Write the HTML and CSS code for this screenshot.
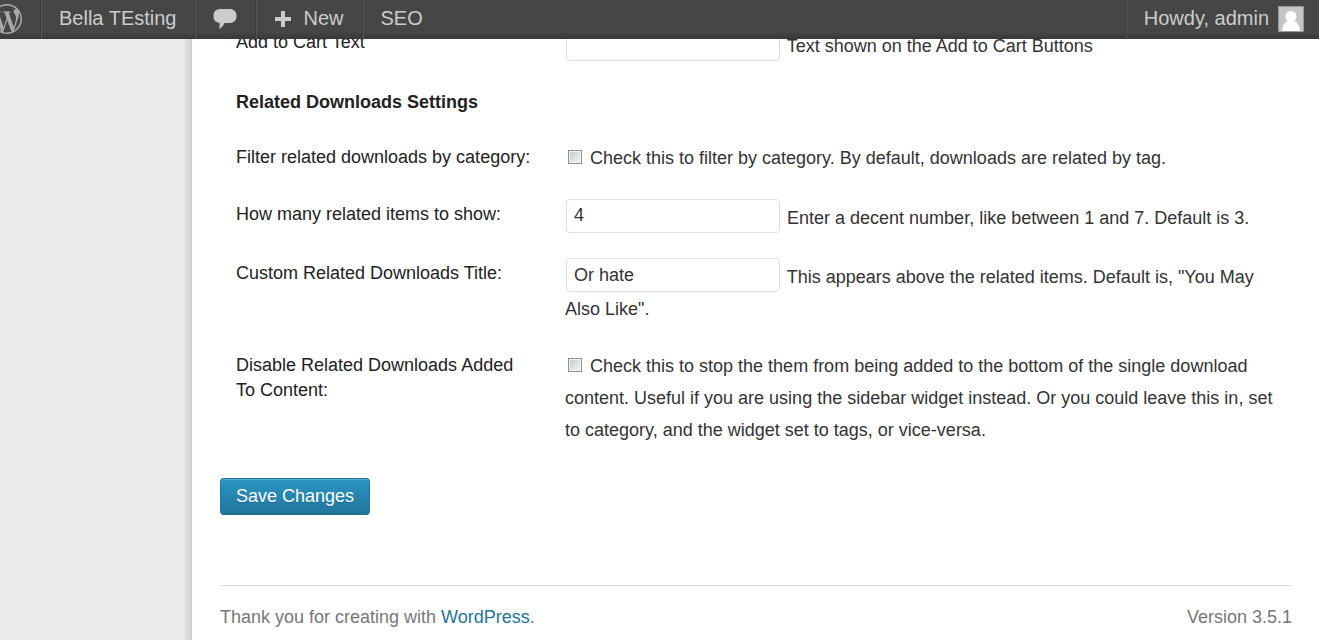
FILE: index.html
```html
<!DOCTYPE html>
<html lang="en">
<head>
    <meta charset="UTF-8">
    <meta name="viewport" content="width=device-width, initial-scale=1.0">
    <title>Settings - Bella TEsting</title>
    <link rel="stylesheet" href="styles.css">
</head>
<body>

    <nav class="adminbar">
        <a href="#" class="bar-item bar-logo" aria-label="About WordPress">
            <svg class="logo" viewBox="0 0 24 24"><path d="M21.469 6.825c.84 1.537 1.318 3.3 1.318 5.175 0 3.979-2.156 7.456-5.363 9.325l3.295-9.527c.615-1.54.82-2.771.82-3.864 0-.405-.026-.78-.07-1.11m-7.981.105c.647-.03 1.232-.105 1.232-.105.582-.075.514-.93-.067-.899 0 0-1.755.135-2.88.135-1.064 0-2.85-.15-2.85-.15-.585-.03-.661.855-.075.885 0 0 .54.061 1.125.09l1.68 4.605-2.37 7.08L5.354 6.9c.649-.03 1.234-.1 1.234-.1.585-.075.516-.93-.065-.896 0 0-1.746.138-2.874.138-.2 0-.438-.008-.69-.015C4.911 3.15 8.235 1.215 12 1.215c2.809 0 5.365 1.072 7.286 2.833-.046-.003-.091-.009-.141-.009-1.06 0-1.812.923-1.812 1.914 0 .89.513 1.643 1.06 2.531.411.72.89 1.643.89 2.977 0 .915-.354 1.994-.821 3.479l-1.075 3.585-3.9-11.61.001.014zM12 22.784c-1.059 0-2.081-.153-3.048-.437l3.237-9.406 3.315 9.087c.024.053.05.101.078.149-1.12.393-2.325.609-3.582.609M1.211 12c0-1.564.336-3.05.935-4.39L7.29 21.709C3.694 19.96 1.212 16.271 1.211 12M12 0C5.385 0 0 5.385 0 12s5.385 12 12 12 12-5.385 12-12S18.615 0 12 0"/></svg>
        </a>
        <a href="#" class="bar-item">Bella TEsting</a>
        <a href="#" class="bar-item" aria-label="Comments">
            <svg class="bubble" viewBox="0 0 24 22"><path d="M8 1h8c5 0 7.500 2.600 7.500 7s-2.500 7-7.500 7h-4.500c-1 2.600-2.800 4.600-5.500 6 .6-2 .8-4 .4-6.200C2.500 14.200.5 12 .5 8c0-4.400 2.500-7 7.500-7z"/></svg>
        </a>
        <a href="#" class="bar-item">
            <svg class="plus" viewBox="0 0 18 18"><path d="M7 1h4v6h6v4h-6v6H7v-6H1V7h6z"/></svg>
            New
        </a>
        <a href="#" class="bar-item bar-last">SEO</a>
        <a href="#" class="bar-item bar-account">
            Howdy, admin
            <svg class="avatar" viewBox="0 0 26 26"><path class="avatar-bg" d="M.5.5h25v25H.5z"/><circle cx="13" cy="10.500" r="5.500"/><path d="M4 25c.5-6 3-9.500 6.500-10h5c3.500.5 6 4 6.500 10z"/></svg>
        </a>
    </nav>

    <div class="page">
        <aside class="sidebar"></aside>

        <main class="content">
            <form>
                <table class="form-table">
                    <tr>
                        <th><label for="cart-text">Add to Cart Text</label></th>
                        <td><input type="text" id="cart-text"> <span>Text shown on the Add to Cart Buttons</span></td>
                    </tr>
                    <tr>
                        <th colspan="2" class="section-title"><strong>Related Downloads Settings</strong></th>
                    </tr>
                    <tr>
                        <th><label for="filter">Filter related downloads by category:</label></th>
                        <td><input type="checkbox" id="filter"> <label for="filter">Check this to filter by category. By default, downloads are related by tag.</label></td>
                    </tr>
                    <tr>
                        <th><label for="count">How many related items to show:</label></th>
                        <td><input type="text" id="count" value="4"> <span>Enter a decent number, like between 1 and 7. Default is 3.</span></td>
                    </tr>
                    <tr>
                        <th><label for="title">Custom Related Downloads Title:</label></th>
                        <td><input type="text" id="title" value="Or hate"> <span>This appears above the related items. Default is, "You May Also Like".</span></td>
                    </tr>
                    <tr>
                        <th><label for="disable">Disable Related Downloads Added To Content:</label></th>
                        <td><input type="checkbox" id="disable"> <label for="disable">Check this to stop the them from being added to the bottom of the single download content. Useful if you are using the sidebar widget instead. Or you could leave this in, set to category, and the widget set to tags, or vice-versa.</label></td>
                    </tr>
                </table>

                <button type="submit" class="button-primary">Save Changes</button>
            </form>

            <footer class="footer">
                <span>Thank you for creating with <a href="#">WordPress</a>.</span>
                <span>Version 3.5.1</span>
            </footer>
        </main>
    </div>

</body>
</html>
```

FILE: styles.css
```css
* {
    box-sizing: border-box;
}

body {
    margin: 0;
    font-family: "Liberation Sans", Arial, sans-serif;
    font-size: 18px;
    color: #333;
    background-color: #fff;
}

/* admin bar */
.adminbar {
    position: fixed;
    top: 0;
    left: 0;
    right: 0;
    z-index: 10;
    display: flex;
    height: 39px;
    overflow: hidden;
    background: linear-gradient(to top, #373737 0, #464646 7px);
}

.bar-item {
    display: flex;
    align-items: center;
    gap: 11px;
    padding: 0 18px 2px;
    border-right: 1px solid #3a3a3a;
    box-shadow: 1px 0 0 #555;
    color: #ccc;
    font-size: 20px;
    line-height: 37px;
    text-decoration: none;
}

.bar-item svg {
    flex: none;
    fill: #ccc;
}

.bar-logo {
    justify-content: flex-end;
    width: 41px;
}

.bar-item .logo {
    width: 30px;
    height: 30px;
    fill: #aaa;
}

.bubble {
    width: 24px;
    height: 22px;
}

.plus {
    width: 18px;
    height: 18px;
}

.bar-last {
    border-right: 0;
    box-shadow: none;
}

.bar-account {
    gap: 9px;
    margin-left: auto;
    padding-right: 15px;
    border-right: 0;
    border-left: 1px solid #3a3a3a;
    box-shadow: inset 1px 0 0 #555;
}

.bar-item .avatar {
    width: 26px;
    height: 26px;
    fill: #fff;
}

.avatar .avatar-bg {
    fill: #c5c5c5;
    stroke: #999;
}

/* layout */
.page {
    display: flex;
    min-height: 100vh;
}

.sidebar {
    flex: none;
    width: 192px;
    border-right: 1px solid #ccc;
    background: linear-gradient(to left, #d2d2d2 0, #ebebeb 9px);
}

.content {
    flex: 1;
    padding: 16px 27px 0 28px;
}

/* settings form */
.form-table {
    width: 100%;
    border-collapse: collapse;
}

.form-table th,
.form-table td {
    text-align: left;
    vertical-align: top;
}

.form-table th {
    width: 331px;
    padding: 14px 18px 14px 16px;
    color: #222;
    font-weight: normal;
    line-height: 25px;
}

.form-table .section-title {
    padding-bottom: 16px;
}

.form-table td {
    padding: 11px 14px;
    padding-bottom: 14px;
    line-height: 32px;
}

input[type="text"] {
    width: 214px;
    height: 34px;
    margin: 0 2px 0 1px;
    padding: 4px 7px;
    border: 1px solid #dfdfdf;
    border-radius: 4px;
    background-color: #fff;
    color: #333;
    font-family: inherit;
    font-size: 18px;
    vertical-align: 2px;
}

input[type="checkbox"] {
    appearance: none;
    width: 14px;
    height: 14px;
    margin: 0 3px;
    border: 1px solid #8e8f8f;
    background: linear-gradient(135deg, #c3c7cc, #f6f6f6);
    box-shadow: inset 0 0 0 1px #f4f4f4;
}

input[type="checkbox"]:checked {
    background: #21759b;
}

.button-primary {
    display: block;
    height: 37px;
    margin-top: 18px;
    padding: 0 15px;
    border: 1px solid #21759b;
    border-bottom-color: #1e6a8d;
    border-radius: 4px;
    background: linear-gradient(#2a95c5, #21759b);
    box-shadow: inset 0 1px 0 rgba(120, 200, 230, 0.5);
    color: #fff;
    font-family: inherit;
    font-size: 18px;
    text-shadow: 0 1px 0 rgba(0, 0, 0, 0.2);
    cursor: pointer;
}

/* footer */
.footer {
    display: flex;
    justify-content: space-between;
    margin-top: 70px;
    padding: 18px 0 10px;
    border-top: 1px solid #dfdfdf;
    color: #777;
    line-height: 26px;
}

.footer a {
    color: #21759b;
    text-decoration: none;
}
```
